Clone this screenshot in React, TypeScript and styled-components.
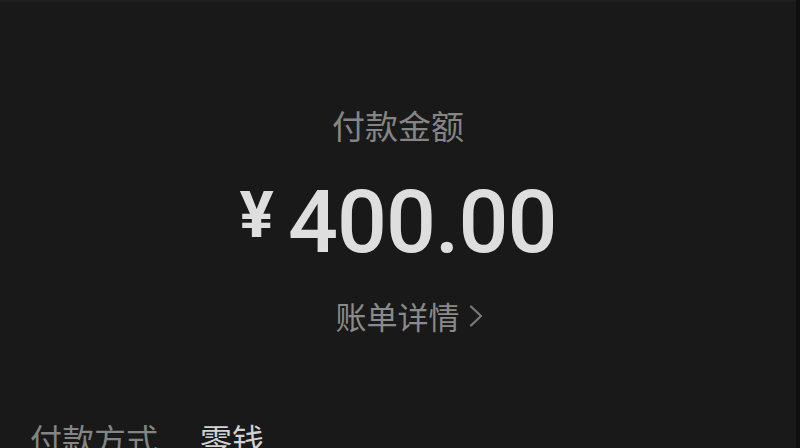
import { createGlobalStyle, styled } from "styled-components"

const GlobalStyle = createGlobalStyle`
  html, body {
    margin: 0;
    padding: 0;
    background: #191919;
  }
  body {
    font-family: "Noto Sans CJK SC", "Noto Sans", Roboto, sans-serif;
  }
`

const Screen = styled.div`
  width: 800px;
  height: 448px;
  display: flex;
  overflow: hidden;
  background: #191919;
`

const Page = styled.div`
  flex: 1;
  display: flex;
  flex-flow: column;
`

const EdgeStrip = styled.div`
  width: 4px;
  background: #0f0f0f;
`

const TopBar = styled.div`
  height: 18px;
  border-bottom: solid 2px #1f1f1f;
`

const Summary = styled.div`
  display: flex;
  flex-flow: column;
  align-items: center;
  padding-top: 101px;
`

const Label = styled.div`
  font-size: 33px;
  line-height: 44px;
  color: #858585;
`

const Amount = styled.div`
  display: flex;
  align-items: baseline;
  margin-top: 31px;
  color: #dedede;
  font-family: Roboto, "Noto Sans", sans-serif;
  font-weight: 500;
  line-height: 88px;
`

const Currency = styled.span`
  font-size: 64px;
  font-weight: 700;
  margin-right: 14px;
  position: relative;
  top: -15px;
`

const Digits = styled.span`
  font-size: 88px;
  letter-spacing: -1px;
`

const DetailLink = styled.div`
  display: flex;
  align-items: center;
  gap: 9px;
  margin-top: 21px;
  padding-left: 22px;
  font-size: 31px;
  line-height: 40px;
  color: #8a8a8a;
`

const Row = styled.div`
  display: flex;
  align-items: center;
  gap: 42px;
  margin-top: 82px;
  padding-left: 30px;
  font-size: 32px;
  line-height: 40px;
`

const RowLabel = styled.span`
  color: #858585;
`

const RowValue = styled.span`
  color: #d2d2d2;
`

const Chevron = () => (
  <svg width="14" height="22" viewBox="0 0 14 22" fill="none">
    <path d="M2 1.5 L12 11 L2 20.5" stroke="#7a7a7a" strokeWidth="2.2" strokeLinecap="round" strokeLinejoin="round" />
  </svg>
)

export default function App() {
  return (
    <>
      <GlobalStyle />
      <Screen>
        <Page>
          <TopBar />
          <Summary>
            <Label>付款金额</Label>
            <Amount>
              <Currency>¥</Currency>
              <Digits>400.00</Digits>
            </Amount>
            <DetailLink>
              账单详情
              <Chevron />
            </DetailLink>
          </Summary>
          <Row>
            <RowLabel>付款方式</RowLabel>
            <RowValue>零钱</RowValue>
          </Row>
        </Page>
        <EdgeStrip />
      </Screen>
    </>
  )
}
